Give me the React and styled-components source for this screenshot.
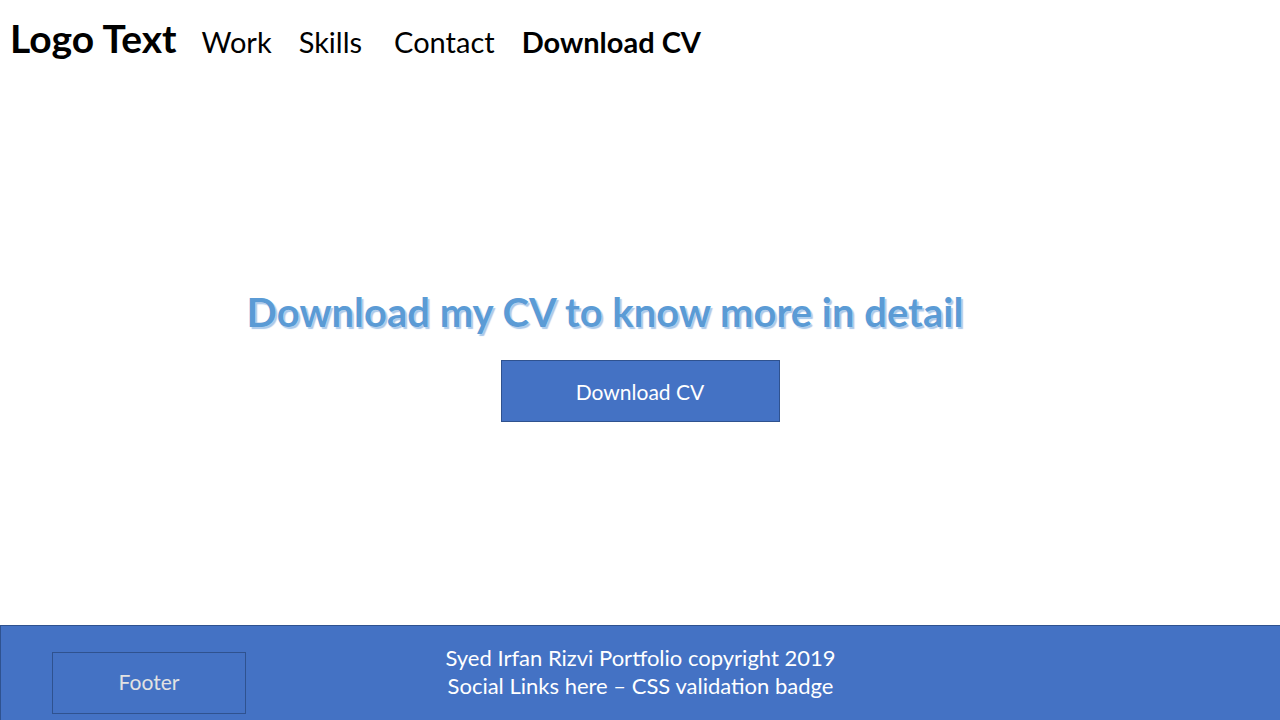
import React from 'react';
import styled, { createGlobalStyle } from 'styled-components';

const blue = '#4472c4';
const darkBlue = '#2f528f';

const GlobalStyle = createGlobalStyle`
  html, body {
    margin: 0;
    padding: 0;
    background: #fff;
  }
  body {
    font-family: Lato, "Open Sans", sans-serif;
  }
`;

const Page = styled.div`
  display: flex;
  flex-direction: column;
  height: 720px;
  width: 1280px;
  overflow: hidden;
`;

const Header = styled.div`
  display: flex;
  align-items: baseline;
  height: 85px;
  padding: 15px 0 0 10px;
  box-sizing: border-box;
`;

const Logo = styled.div`
  font-size: 39px;
  font-weight: 700;
  color: #000;
  margin-right: 25px;
`;

const NavItem = styled.div`
  font-size: 29px;
  font-weight: ${p => (p.bold ? 700 : 400)};
  color: #000;
  margin-right: ${p => p.space || 27}px;
`;

const Main = styled.div`
  flex: 1;
  display: flex;
  flex-direction: column;
  align-items: center;
  padding-top: 203px;
`;

const Heading = styled.h1`
  margin: 0 70px 0 0;
  font-size: 40px;
  font-weight: 700;
  color: #5b9bd5;
  text-shadow: 0 0 1px #fff, 2px 2px 1px #a9c8ea;
`;

const Button = styled.div`
  margin-top: 24px;
  width: 279px;
  height: 62px;
  box-sizing: border-box;
  background: ${blue};
  border: 1px solid ${darkBlue};
  color: #fff;
  font-size: 21px;
  display: flex;
  align-items: center;
  justify-content: center;
`;

const Footer = styled.div`
  height: 95px;
  box-sizing: border-box;
  background: ${blue};
  border-top: 1px solid ${darkBlue};
  border-left: 1px solid ${darkBlue};
  display: grid;
  grid-template-columns: 1fr auto 1fr;
`;

const FooterBox = styled.div`
  margin: 26px 0 0 51px;
  width: 194px;
  height: 62px;
  box-sizing: border-box;
  border: 1px solid ${darkBlue};
  color: #e2e2e2;
  font-size: 21px;
  padding-bottom: 3px;
  display: flex;
  align-items: center;
  justify-content: center;
`;

const FooterText = styled.div`
  padding-top: 18px;
  color: #fff;
  font-size: 22px;
  line-height: 28px;
  text-align: center;
`;

export default function App() {
  return (
    <Page>
      <GlobalStyle />
      <Header>
        <Logo>Logo Text</Logo>
        <NavItem>Work</NavItem>
        <NavItem space={32}>Skills</NavItem>
        <NavItem space={27}>Contact</NavItem>
        <NavItem bold>Download CV</NavItem>
      </Header>
      <Main>
        <Heading>Download my CV to know more in detail</Heading>
        <Button>Download CV</Button>
      </Main>
      <Footer>
        <div>
          <FooterBox>Footer</FooterBox>
        </div>
        <FooterText>
          Syed Irfan Rizvi Portfolio copyright 2019
          <br />
          Social Links here – CSS validation badge
        </FooterText>
        <div />
      </Footer>
    </Page>
  );
}
